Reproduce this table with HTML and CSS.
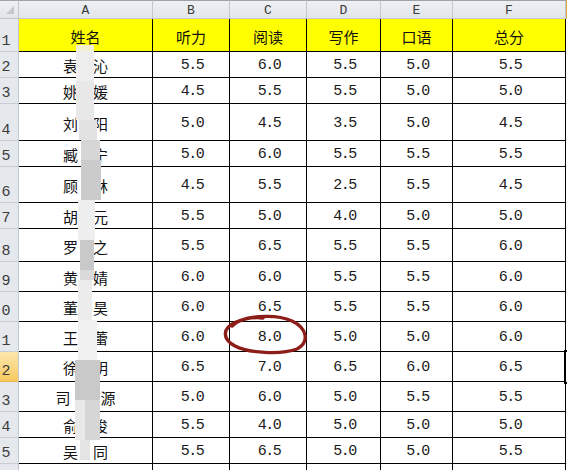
FILE: index.html
```html
<!DOCTYPE html>
<html lang="zh-CN">
<head>
<meta charset="utf-8">
<title>成绩表</title>
<link rel="stylesheet" href="styles.css">
</head>
<body>
<div class="sheet">
  <div class="grid" role="table">
    <div class="row" role="row">
      <div class="corner"><span class="tri"></span></div>
      <div class="ch">A</div><div class="ch">B</div><div class="ch">C</div><div class="ch">D</div><div class="ch">E</div><div class="ch">F</div><div class="ch chsel"></div>
    </div>
    <div class="row" role="row">
      <div class="rh">1</div>
      <div class="c hd">姓名</div><div class="c hd">听力</div><div class="c hd">阅读</div><div class="c hd">写作</div><div class="c hd">口语</div><div class="c hd">总分</div><div class="c g"></div>
    </div>
    <div class="row" role="row">
      <div class="rh">2</div>
      <div class="c nm">袁　沁</div><div class="c n">5.5</div><div class="c n">6.0</div><div class="c n">5.5</div><div class="c n">5.0</div><div class="c n">5.5</div><div class="c g"></div>
    </div>
    <div class="row" role="row">
      <div class="rh">3</div>
      <div class="c nm">姚　媛</div><div class="c n">4.5</div><div class="c n">5.5</div><div class="c n">5.5</div><div class="c n">5.0</div><div class="c n">5.0</div><div class="c g"></div>
    </div>
    <div class="row" role="row">
      <div class="rh">4</div>
      <div class="c nm">刘　阳</div><div class="c n">5.0</div><div class="c n">4.5</div><div class="c n">3.5</div><div class="c n">5.0</div><div class="c n">4.5</div><div class="c g"></div>
    </div>
    <div class="row" role="row">
      <div class="rh">5</div>
      <div class="c nm">臧　宁</div><div class="c n">5.0</div><div class="c n">6.0</div><div class="c n">5.5</div><div class="c n">5.5</div><div class="c n">5.5</div><div class="c g"></div>
    </div>
    <div class="row" role="row">
      <div class="rh">6</div>
      <div class="c nm">顾　林</div><div class="c n">4.5</div><div class="c n">5.5</div><div class="c n">2.5</div><div class="c n">5.5</div><div class="c n">4.5</div><div class="c g"></div>
    </div>
    <div class="row" role="row">
      <div class="rh">7</div>
      <div class="c nm">胡　元</div><div class="c n">5.5</div><div class="c n">5.0</div><div class="c n">4.0</div><div class="c n">5.0</div><div class="c n">5.0</div><div class="c g"></div>
    </div>
    <div class="row" role="row">
      <div class="rh">8</div>
      <div class="c nm">罗　之</div><div class="c n">5.5</div><div class="c n">6.5</div><div class="c n">5.5</div><div class="c n">5.5</div><div class="c n">6.0</div><div class="c g"></div>
    </div>
    <div class="row" role="row">
      <div class="rh">9</div>
      <div class="c nm">黄　婧</div><div class="c n">6.0</div><div class="c n">6.0</div><div class="c n">5.5</div><div class="c n">5.5</div><div class="c n">6.0</div><div class="c g"></div>
    </div>
    <div class="row" role="row">
      <div class="rh">10</div>
      <div class="c nm">董　昊</div><div class="c n">6.0</div><div class="c n">6.5</div><div class="c n">5.5</div><div class="c n">5.5</div><div class="c n">6.0</div><div class="c g"></div>
    </div>
    <div class="row" role="row">
      <div class="rh">11</div>
      <div class="c nm">王　蕾</div><div class="c n">6.0</div><div class="c n">8.0</div><div class="c n">5.0</div><div class="c n">5.0</div><div class="c n">6.0</div><div class="c g"></div>
    </div>
    <div class="row" role="row">
      <div class="rh rhsel">12</div>
      <div class="c nm">徐　明</div><div class="c n">6.5</div><div class="c n">7.0</div><div class="c n">6.5</div><div class="c n">6.0</div><div class="c n">6.5</div><div class="c g"></div>
    </div>
    <div class="row" role="row">
      <div class="rh">13</div>
      <div class="c nm">司　　源</div><div class="c n">5.0</div><div class="c n">6.0</div><div class="c n">5.0</div><div class="c n">5.5</div><div class="c n">5.5</div><div class="c g"></div>
    </div>
    <div class="row" role="row">
      <div class="rh">14</div>
      <div class="c nm">俞　俊</div><div class="c n">5.5</div><div class="c n">4.0</div><div class="c n">5.0</div><div class="c n">5.0</div><div class="c n">5.0</div><div class="c g"></div>
    </div>
    <div class="row" role="row">
      <div class="rh">15</div>
      <div class="c nm">吴　同</div><div class="c n">5.5</div><div class="c n">6.5</div><div class="c n">5.0</div><div class="c n">5.0</div><div class="c n">5.5</div><div class="c g"></div>
    </div>
    <div class="row" role="row">
      <div class="rh">16</div>
      <div class="c"></div><div class="c"></div><div class="c"></div><div class="c"></div><div class="c"></div><div class="c"></div><div class="c g"></div>
    </div>
  </div>

  <div class="mosaic" aria-hidden="true">
    <span class="m m1"></span><span class="m m2"></span><span class="m m3"></span><span class="m m4"></span>
    <span class="m m5"></span><span class="m m6"></span><span class="m m7"></span><span class="m m8"></span>
    <span class="m m9"></span><span class="m m10"></span><span class="m m11"></span><span class="m m12"></span>
    <span class="m m13"></span><span class="m m14"></span><span class="m m15"></span>
  </div>

  <svg class="ink" width="567" height="470" viewBox="0 0 567 470" aria-hidden="true">
    <path d="M232 326 C241 316 274 313 292 321 C307 328 310 342 297 349 C281 355 248 353 235 346 C222 339 222 328 236 322 C246 318 256 317 263 318" fill="none" stroke="#8c1d18" stroke-width="3.4" stroke-linecap="round" stroke-linejoin="round"/>
  </svg>

  <div class="cursor" aria-hidden="true"></div>
</div>
</body>
</html>
```

FILE: styles.css
```css
html, body {
  margin: 0;
  padding: 0;
  background: #ffffff;
}

body {
  width: 567px;
  height: 470px;
  overflow: hidden;
}

.sheet {
  position: relative;
  width: 567px;
  height: 470px;
  overflow: hidden;
  font-family: "Noto Sans CJK SC", "Noto Sans", sans-serif;
  color: #111;
}

.grid {
  display: grid;
  grid-template-columns: 19px 134px 77px 77px 74px 72px 113px 40px;
  grid-template-rows: 19px 33px 26px 26px 37px 26px 36px 26px 33px 30px 30px 30px 30px 30px 26px 26px 30px;
  width: 606px;
}

.row {
  display: contents;
}

.corner,
.ch {
  box-sizing: border-box;
  background: linear-gradient(#eef0f3, #e2e5ea);
  border-top: 1px solid #9da2a8;
  border-right: 1px solid #c3c7cd;
  border-bottom: 1px solid #c3c7cd;
}

.corner {
  position: relative;
}

.tri {
  position: absolute;
  right: 4px;
  bottom: 4px;
  width: 0;
  height: 0;
  border-left: 8px solid transparent;
  border-bottom: 8px solid #c4c8cd;
}

.ch {
  display: flex;
  align-items: center;
  justify-content: center;
  padding-top: 1px;
  font-family: "Liberation Mono", monospace;
  font-size: 13px;
  color: #3a3a3a;
}

.chsel {
  background: linear-gradient(#fbe6b0, #f6cf73);
  border-left: 1px solid #e0a83c;
}

.rh {
  box-sizing: border-box;
  display: flex;
  align-items: flex-end;
  justify-content: flex-end;
  overflow: hidden;
  padding: 0 6px 2px 0;
  background: #e5e8ec;
  border-right: 1px solid #c3c7cd;
  border-bottom: 1px solid #c9cdd3;
  font-family: "Liberation Mono", monospace;
  font-size: 15px;
  letter-spacing: 1.5px;
  line-height: 1;
  color: #3c3c3c;
  white-space: nowrap;
}

.rhsel {
  background: linear-gradient(#fce7ae, #f7c95f);
  border-bottom-color: #e8b34a;
}

.c {
  box-sizing: border-box;
  display: flex;
  align-items: center;
  justify-content: center;
  padding-top: 2px;
  border-right: 1px solid #000;
  border-bottom: 1px solid #000;
  white-space: nowrap;
  overflow: hidden;
}

.hd {
  background: #ffff00;
  font-size: 15px;
  padding-top: 3px;
}

.nm {
  font-size: 15px;
}

.n {
  font-family: "Liberation Mono", monospace;
  font-size: 15px;
  letter-spacing: -1.5px;
  padding-left: 2px;
  color: #1a1a1a;
}

.g {
  border-right: none;
  border-bottom-color: #d4d4d4;
}

/* privacy mosaic over the name column */
.m {
  position: absolute;
  display: block;
}
.m1  { left: 76px; top: 45px;  width: 18px; height: 6px;  background: #f2f0cf; }
.m2  { left: 76px; top: 51px;  width: 18px; height: 30px; background: #ededed; }
.m3  { left: 76px; top: 81px;  width: 18px; height: 39px; background: #e8e8e8; }
.m4  { left: 79px; top: 120px; width: 18px; height: 20px; background: #e2e2e2; }
.m5  { left: 81px; top: 140px; width: 19px; height: 20px; background: #d6d6d6; }
.m6  { left: 81px; top: 160px; width: 20px; height: 40px; background: #cbcbcb; }
.m7  { left: 78px; top: 200px; width: 17px; height: 40px; background: #eeeeee; }
.m8  { left: 80px; top: 240px; width: 14px; height: 30px; background: #c9c9c9; }
.m9  { left: 80px; top: 270px; width: 14px; height: 10px; background: #dadada; }
.m10 { left: 78px; top: 280px; width: 14px; height: 40px; background: #ececec; }
.m11 { left: 78px; top: 320px; width: 19px; height: 40px; background: #f1f1f1; }
.m12 { left: 75px; top: 360px; width: 25px; height: 40px; background: #c9c9c9; }
.m13 { left: 75px; top: 400px; width: 10px; height: 40px; background: #e9e9e9; }
.m14 { left: 85px; top: 400px; width: 15px; height: 40px; background: #d6d6d6; }
.m15 { left: 80px; top: 440px; width: 10px; height: 20px; background: #e4e4e4; }

.ink {
  position: absolute;
  left: 0;
  top: 0;
  pointer-events: none;
}

.cursor {
  position: absolute;
  left: 564px;
  top: 350px;
  width: 12px;
  height: 30px;
  border: 2px solid #000;
}
```
